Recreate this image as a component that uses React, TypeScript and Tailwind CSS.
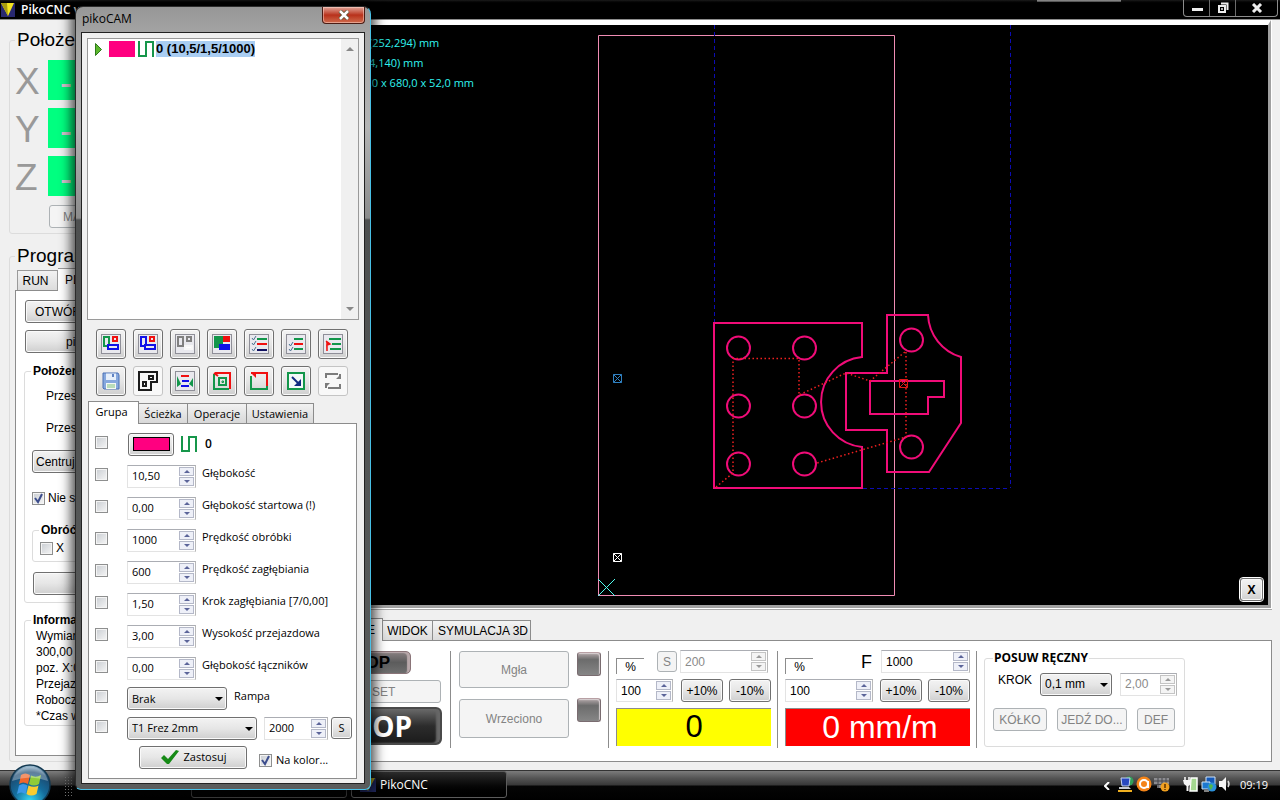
import React, { useState } from "react";

const segoe = "font-['Open_Sans','Noto_Sans',sans-serif]";
const arial = "font-['Liberation_Sans',Arial,sans-serif]";

const btnOn =
    "rounded-[3px] border border-[#707070] bg-linear-to-b from-[#f3f3f3] via-[#e6e6e6] to-[#cfcfcf] text-black shadow-[inset_0_0_0_1px_#fafafa]";
const btnOff = "rounded-[3px] border border-[#adb2b5] bg-[#f4f4f4] text-[#838383]";

interface SpinProps {
    id?: string;
    label: string;
    value: string;
    className: string;
    disabled?: boolean;
}

function Spin({ id, label, value, className, disabled }: SpinProps) {
    const [val, setVal] = useState(value);
    const step = "flex flex-1 w-full items-center justify-center border";
    const color = disabled ? "border-[#c4c4c4] bg-[#f4f4f4] text-[#9a9a9a]" : "border-[#b4b8c8] bg-[#eef0f8] text-[#5b6499]";

    return (
        <div className={`flex h-[23px] shrink-0 border border-[#e3e3e3] border-t-[#abadb3] border-r-[#b8b8b8] bg-white ${className}`}>
            <input
                id={id}
                aria-label={label}
                value={val}
                onChange={(e) => setVal(e.target.value)}
                disabled={disabled}
                className={`w-0 min-w-0 flex-1 bg-transparent pl-1 outline-none ${disabled ? "text-[#8a8a8a]" : "text-black"}`}
            />
            <div className="flex w-4 flex-col gap-px p-px pl-0">
                <button type="button" aria-label={`${label} +`} className={`${step} ${color}`}>
                    <svg viewBox="0 0 6 3" className="h-[3px] w-[6px]" fill="currentColor"><path d="M3 0L6 3H0z" /></svg>
                </button>
                <button type="button" aria-label={`${label} -`} className={`${step} ${color}`}>
                    <svg viewBox="0 0 6 3" className="h-[3px] w-[6px]" fill="currentColor"><path d="M0 0H6L3 3z" /></svg>
                </button>
            </div>
        </div>
    );
}

function Drop({ label, value, className }: { label: string; value: string; className: string }) {
    return (
        <div className={`relative shrink-0 ${className}`}>
            <select aria-label={label} className={`h-[23px] w-full appearance-none pl-1 ${btnOn}`}>
                <option>{value}</option>
            </select>
            <svg viewBox="0 0 8 4" className="pointer-events-none absolute top-[10px] right-1 h-1 w-2"><path d="M0 0H8L4 4z" /></svg>
        </div>
    );
}

function Check({ id, checked, label, className = "" }: { id: string; checked?: boolean; label?: string; className?: string }) {
    const [on, setOn] = useState(!!checked);

    return (
        <span className={`relative block size-[13px] shrink-0 ${className}`}>
            <input
                id={id}
                type="checkbox"
                aria-label={label}
                checked={on}
                onChange={() => setOn(!on)}
                className="block size-[13px] appearance-none border border-[#8e8f8f] bg-linear-to-br from-[#c9cdd2] to-[#f6f6f6] shadow-[inset_0_0_0_1px_#f4f4f4]"
            />
            {on && (
                <svg viewBox="0 0 13 13" className="pointer-events-none absolute inset-0" fill="none" stroke="#3b4c8c" strokeWidth="2">
                    <path d="M3 6l3 4 4-8" />
                </svg>
            )}
        </span>
    );
}

function ZigZag({ className }: { className: string }) {
    return (
        <svg viewBox="0 0 16 16" className={className} fill="none" stroke="#16964a" strokeWidth="2">
            <path d="M1 0V15H8V1H15V16" />
        </svg>
    );
}

const plate = <rect x="0.5" y="0.5" width="19" height="19" fill="#e9e9ee" stroke="#8f8f98" strokeWidth="1" />;

const tools = [
    {
        name: "Grupy kolorów",
        icon: <g fill="none" strokeWidth="2">{plate}<path d="M3 3H8V12H3z" stroke="#12964a" /><path d="M12 3H16V7H12z" stroke="#f01010" /><path d="M7 11H17V15H7z" fill="#e9e9ee" stroke="#1010e8" /></g>,
    },
    {
        name: "Jeden kolor",
        icon: <g fill="none" strokeWidth="2">{plate}<path d="M3 3H8V12H3z" stroke="#1010e8" /><path d="M12 3H16V7H12z" stroke="#f01010" /><path d="M7 11H17V15H7z" fill="#e9e9ee" stroke="#1010e8" /></g>,
    },
    {
        name: "Ukryj grupy",
        icon: <g fill="none" strokeWidth="2">{plate}<path d="M3 3H8V12H3z" stroke="#808080" /><path d="M12 3H16V7H12z" stroke="#808080" /><path d="M10 12H17V15H10z" fill="#fff" stroke="#f8f8f8" /></g>,
    },
    {
        name: "Wypełnienie",
        icon: <g>{plate}<path d="M2 2H11V14H2z" fill="#12964a" /><path d="M11 2H18V8H11z" fill="#f01010" /><path d="M7 10H18V16H7z" fill="#1010e8" /></g>,
    },
    {
        name: "Lista operacji",
        icon: <g fill="none">{plate}<path d="M3 4l1.500 2 2.500-4M3 9l1.500 2 2.500-4M3 15l1.500 2 2.500-4" stroke="#4a7090" /><path d="M8 5H18" stroke="#12964a" strokeWidth="2" /><path d="M8 10H18" stroke="#f01010" strokeWidth="2" /><path d="M8 16H18" stroke="#101060" strokeWidth="2" /></g>,
    },
    {
        name: "Lista ścieżek",
        icon: <g fill="none">{plate}<path d="M3 10l1.500 2 2.500-4M3 15l1.500 2 2.500-4" stroke="#4a7090" /><path d="M8 5H17M8 15H17" stroke="#12964a" strokeWidth="2" /><path d="M8 10H17" stroke="#f01010" strokeWidth="2" /></g>,
    },
    {
        name: "Kolejność",
        icon: <g fill="none">{plate}<path d="M6 5H18M9 10H18M7 15H18" stroke="#12964a" strokeWidth="2" /><path d="M3 7L7 10 4 11V17" fill="#f01010" stroke="#f01010" strokeWidth="1.500" /></g>,
    },
    {
        name: "Zapisz",
        icon: <g><path d="M2 2H17L18 4V18H3L2 17z" fill="#86a8de" stroke="#4b70b4" /><path d="M5 2.500H15V9H5z" fill="#e6effa" /><path d="M11 3H13V6H11z" fill="#5e82c2" /><path d="M5 12H15V18H5z" fill="#f4f8f4" /><path d="M6 14H14M6 16H14" stroke="#7fc07f" /></g>,
    },
    {
        name: "Obrys",
        off: true,
        icon: <g fill="none" stroke="#1c1c1c" strokeWidth="2"><path d="M1 1H19V11H13V19H1z" /><path d="M11 5H15V8H11z" /><path d="M5 11H8V15H5z" /></g>,
    },
    {
        name: "Odstęp",
        icon: <g fill="none">{plate}<path d="M6 5H14" stroke="#f01010" strokeWidth="2" /><path d="M7 10H14M6 15H14" stroke="#1010e8" strokeWidth="2" /><path d="M2 5V16L6 13zM18 7V16L14 13z" fill="#12964a" /></g>,
    },
    {
        name: "Kieszeń",
        icon: <g fill="none" strokeWidth="2"><path d="M18 18V2H3" stroke="#f01010" /><path d="M2 3V18H17" stroke="#12964a" /><path d="M7 7H14V14H7z" stroke="#12964a" /><path d="M10 10H11.500V11.500H10z" stroke="#12964a" strokeWidth="1" /><path d="M2 2L6 5" stroke="#f01010" /></g>,
    },
    {
        name: "Kontur",
        icon: <g fill="none" strokeWidth="2"><path d="M2 2H18V15" stroke="#f01010" /><path d="M2 5V18H18V15" stroke="#12964a" /><path d="M2 2H7V7z" fill="#f01010" /></g>,
    },
    {
        name: "Przesuń",
        icon: <g fill="none" strokeWidth="2"><path d="M2 2H18V18H2z" stroke="#12964a" fill="#f4f8f8" /><path d="M6 6L12 12" stroke="#102a80" /><path d="M15 8V15H8z" fill="#102a80" /></g>,
    },
    {
        name: "Odśwież",
        off: true,
        icon: <g fill="none" stroke="#7c7c7c" strokeWidth="2"><path d="M3 7V3H15M17 3V7M17 13V17H5M3 17V13" /><path d="M13 8H18V3zM7 12H2V17z" fill="#7c7c7c" stroke="none" /></g>,
    },
];

const params = [
    ["Głębokość", "10,50"],
    ["Głębokość startowa (!)", "0,00"],
    ["Prędkość obróbki", "1000"],
    ["Prędkość zagłębiania", "600"],
    ["Krok zagłębiania [7/0,00]", "1,50"],
    ["Wysokość przejazdowa", "3,00"],
    ["Głębokość łączników", "0,00"],
];

function CamDialog() {
    return (
        <div
            role="dialog"
            aria-label="pikoCAM"
            className={`absolute top-[6px] left-[75px] z-10 w-[296px] rounded-t-lg rounded-b-md border border-[#2b2b2b] border-r-[#49c0e6] border-b-[#49c0e6] bg-[linear-gradient(to_bottom,#979797_0,#a6a6a6_30px,#b4b4b4_120px,#8c8c8c_211px,#4e5050_213px,#5a5c5c_100%)] px-[5px] pb-[5px] text-[12px] leading-4 shadow-[0_0_12px_4px_rgba(0,0,0,0.7)] ${segoe}`}
        >
            <div className="flex h-[25px] items-start justify-between">
                <span className="pt-1 pl-px">pikoCAM</span>
                <button
                    type="button"
                    aria-label="Zamknij"
                    className="flex h-[17px] w-[43px] items-center justify-center rounded-b-[4px] border border-t-0 border-[#4a1c14] bg-linear-to-b from-[#e0a398] via-[#b8301a] to-[#cf6a4c] shadow-[inset_0_0_0_1px_rgba(255,220,210,0.5)]"
                >
                    <svg viewBox="0 0 12 10" className="h-[10px] w-3" fill="none"><path d="M2 1L10 9M10 1L2 9" stroke="#553" strokeWidth="4" /><path d="M2 1L10 9M10 1L2 9" stroke="#fff" strokeWidth="2.500" /></svg>
                </button>
            </div>
            <div className="border border-[#222] bg-[#f0f0f0] p-[5px] pb-1">
                <div className="flex h-[282px] justify-between border border-[#9a9a9a] bg-white">
                    <div className="flex h-5 items-center pl-[7px]">
                        <svg viewBox="0 0 7 13" className="mr-[7px] h-[13px] w-[7px]"><path d="M0.500 0.500L6.500 6.500L0.500 12.500z" fill="#5cb82c" stroke="#2f7a1c" /></svg>
                        <span className="mr-[3px] h-4 w-[26px] bg-[#ff0080]" />
                        <ZigZag className="mr-[2px] size-4" />
                        <b className={`bg-[#a9cdf2] text-[13px] ${arial}`}>0 (10,5/1,5/1000)</b>
                    </div>
                    <div className="flex w-[17px] flex-col items-center justify-between bg-[#f0f0f0] py-2">
                        <svg viewBox="0 0 8 4" className="h-1 w-2" fill="#888"><path d="M4 0L8 4H0z" /></svg>
                        <svg viewBox="0 0 8 4" className="h-1 w-2" fill="#888"><path d="M0 0H8L4 4z" /></svg>
                    </div>
                </div>

                <div className="flex flex-wrap gap-[7px] py-[9px] pl-[9px] pb-0">
                    {tools.map((t) => (
                        <button
                            key={t.name}
                            type="button"
                            aria-label={t.name}
                            className={`flex size-[30px] items-center justify-center ${t.off ? "rounded-[3px] border border-[#c4c4c4] bg-[#f8f8f8]" : btnOn}`}
                        >
                            <svg viewBox="0 0 20 20" className="size-5">{t.icon}</svg>
                        </button>
                    ))}
                </div>

                <div className="mt-[5px] flex items-end pl-px">
                    <button type="button" className="z-[1] -mb-px h-[23px] w-[51px] border border-b-0 border-[#8c8c8c] bg-white pr-1 pb-[2px] text-[11px]">Grupa</button>
                    {[["Ścieżka", "w-[49px]"], ["Operacje", "w-[59px]"], ["Ustawienia", "w-[67px]"]].map(([t, w]) => (
                        <button key={t} type="button" className={`h-5 border border-b-0 border-l-0 border-[#8c8c8c] bg-linear-to-b from-[#f2f2f2] to-[#d8d8d8] text-[11px] ${w}`}>{t}</button>
                    ))}
                </div>
                <div className="mr-[2px] ml-px border border-[#8c8c8c] bg-white px-[6px] pt-1 pb-[7px] text-[11px]">
                    <div className="flex h-8 items-center">
                        <Check id="c-color" label="Kolor" className="mb-[3px]" />
                        <button type="button" aria-label="Kolor grupy" className={`mr-[7px] ml-[20px] flex h-[23px] w-[46px] items-center justify-center ${btnOn}`}>
                            <span className="h-[14px] w-[37px] border border-black bg-[#ff0080]" />
                        </button>
                        <ZigZag className="mr-2 size-4" />
                        <span className="text-[12px] font-semibold">0</span>
                    </div>
                    {params.map(([label, value], i) => (
                        <div key={label} className="flex h-8 items-center last:h-[31px]">
                            <Check id={`c-${i}`} className="mb-1" />
                            <Spin label={label} value={value} className="mr-[6px] ml-[19px] w-[69px]" />
                            <label htmlFor={`c-${i}`} className="pb-[6px]">{label}</label>
                        </div>
                    ))}
                    <div className="flex h-[29px] items-center">
                        <Check id="c-ramp" className="mb-1" />
                        <Drop label="Rampa" value="Brak" className="mr-[7px] ml-[19px] w-[100px]" />
                        <label htmlFor="c-ramp" className="pb-[6px]">Rampa</label>
                    </div>
                    <div className="flex h-[30px] items-center">
                        <Check id="c-tool" label="Narzędzie" className="mb-1" />
                        <Drop label="Narzędzie" value="T1 Frez 2mm" className="mr-[7px] ml-[19px] w-[130px]" />
                        <Spin label="Obroty" value="2000" className="mr-[3px] w-[64px]" />
                        <button type="button" className={`h-[22px] w-[21px] shrink-0 ${btnOn}`}>S</button>
                    </div>
                    <div className="flex h-7 items-center pl-[44px]">
                        <button type="button" className={`mr-3 flex h-[23px] w-[108px] items-center justify-center gap-1 text-[11px] ${btnOn}`}>
                            <svg viewBox="0 0 20 16" className="h-4 w-5"><path d="M1 9L4 6L8 10L16 1L19 2L9 15H7z" fill="#168a16" /></svg>
                            Zastosuj
                        </button>
                        <Check id="c-all" checked className="mt-[6px]" />
                        <label htmlFor="c-all" className="pt-[5px] pl-1">Na kolor...</label>
                    </div>
                </div>
            </div>
        </div>
    );
}

const group = "rounded-[3px] border border-[#dcdcdc]";

function Sidebar() {
    return (
        <aside className="flex w-[360px] shrink-0 flex-col pt-2 pl-[9px] text-[12px] leading-4">
            <fieldset className={`h-[206px] ${group}`}>
                <legend className="ml-[5px] px-[2px] text-[19px] leading-6">Położenie</legend>
                <div className="mt-2 flex flex-col gap-2 pl-[5px]">
                    {["X", "Y", "Z"].map((axis) => (
                        <div key={axis} className="flex h-10 items-center">
                            <span className="w-[33px] pt-1 text-[37px] text-[#999]">{axis}</span>
                            <span className="h-10 flex-1 bg-[#00ff80] pl-3 text-[36px] leading-[46px] text-[#d4c4cc]">-</span>
                        </div>
                    ))}
                </div>
                <button type="button" disabled className={`mt-[9px] ml-[39px] h-[23px] w-[90px] pl-[13px] text-left ${btnOff}`}>MASZYNA</button>
            </fieldset>

            <fieldset className={`mt-[10px] h-[518px] ${group}`}>
                <legend className="ml-[5px] px-[2px] text-[19px] leading-6">Program</legend>
                <div className="flex items-end pl-[7px]">
                    <button type="button" className="h-5 w-[41px] border border-b-0 border-[#9a9a9a] bg-linear-to-b from-[#f2f2f2] to-[#dcdcdc] pr-1">RUN</button>
                    <button type="button" className="z-[1] -mb-px h-[23px] w-[70px] border border-b-0 border-l-0 border-[#9a9a9a] bg-white pl-[7px] text-left">PLIK</button>
                </div>
                <div className="ml-[5px] h-[466px] border border-[#8c8c8c] bg-white pt-[9px] pl-2">
                    <button type="button" className={`ml-px block h-[23px] w-[120px] pl-[9px] text-left ${btnOn}`}>OTWÓRZ</button>
                    <button type="button" className={`mt-[7px] ml-px block h-[23px] w-[140px] pl-[40px] text-left ${btnOn}`}>pikoCAM</button>
                    <fieldset className={`mt-[10px] h-[240px] ${group}`}>
                        <legend className="ml-[6px] px-[2px] font-bold">Położenie</legend>
                        <div className="pl-[7px]">
                            <p className="mt-[9px] pl-[14px]">Przesuń X</p>
                            <p className="mt-4 pl-[14px]">Przesuń Y</p>
                            <button type="button" className={`mt-[14px] block h-[23px] w-[90px] pl-[3px] text-left ${btnOn}`}>Centruj</button>
                            <div className="mt-[17px] flex items-center gap-[3px]">
                                <Check id="s-skip" checked />
                                <label htmlFor="s-skip">Nie skaluj</label>
                            </div>
                            <fieldset className={`mt-[16px] h-[40px] ${group}`}>
                                <legend className="ml-[6px] px-[2px] font-bold">Obróć</legend>
                                <div className="flex items-center gap-[3px] pt-[2px] pl-[7px]">
                                    <Check id="s-x" />
                                    <label htmlFor="s-x">X</label>
                                </div>
                            </fieldset>
                            <button type="button" aria-label="Wykonaj" className={`mt-[10px] ml-px block h-[23px] w-[140px] ${btnOn}`} />
                        </div>
                    </fieldset>
                    <fieldset className={`mt-[9px] h-[114px] ${group}`}>
                        <legend className="ml-[6px] px-[2px] font-bold">Informacje</legend>
                        <div className="pl-[11px]">
                            <p>Wymiary</p>
                            <p>300,00</p>
                            <p>poz. X:0</p>
                            <p>Przejazd</p>
                            <p>Roboczy</p>
                            <p>*Czas w</p>
                        </div>
                    </fieldset>
                </div>
            </fieldset>
        </aside>
    );
}

const holes = [[738, 348], [804, 348], [738, 406], [804, 406], [738, 464], [804, 464], [911, 340], [911, 447]];
const marks = [[617, 378, "#2f80c0"], [617, 557, "#ffffff"], [903, 383, "#e01818"]] as const;

function Canvas() {
    return (
        <div className="min-h-0 flex-1 border-b border-[#a8a8a8] bg-white pr-px pb-px">
            <div className="relative h-full border-t-[5px] border-r-[3px] border-b-[3px] border-t-white border-r-[#a0a0a0] border-b-[#a0a0a0] bg-black">
                <svg viewBox="360 25 908 580" className="absolute inset-0 h-full w-full" fill="none">
                    <path d="M598.500 35.500H894.500V595.500H598.500z" stroke="#f08cb4" />
                    <path d="M714.500 25V323M1010.500 25V488M863 488.500H1010" stroke="#0c0cb4" strokeDasharray="4 3" />
                    <g stroke="#f00c78" strokeWidth="2">
                        <path d="M714 323H862V357A45.200 45.200 0 0 0 862 447V488H714z" />
                        <path d="M887 315H928A46 46 0 0 0 961 357V423L929 472H887V430H846V373H887z" />
                        <path d="M870 381H944V397H928V414H870z" />
                        {holes.map(([x, y]) => (
                            <circle key={`${x}-${y}`} cx={x + 0.5} cy={y} r="11.500" />
                        ))}
                    </g>
                    <path d="M716 487L733 473V358.500H799V395L846 373L870 381L906 351V437L817 463" stroke="#f02020" strokeWidth="1.500" strokeDasharray="1.500 2.500" />
                    {marks.map(([x, y, c]) => (
                        <path key={`${x}-${y}`} d={`M${x - 3.5} ${y - 3.5}h8v8h-8zl8 8m0-8l-8 8`} stroke={c} />
                    ))}
                    <path d="M598 579L615 596M615 579L598 596" stroke="#50fff0" />
                </svg>
                <div className={`relative pt-2 pl-[9px] text-[11px] leading-5 text-[#30f4f0] ${segoe}`}>
                    <p>(252,294) mm</p>
                    <p>4,140) mm</p>
                    <p>,0 x 680,0 x 52,0 mm</p>
                </div>
                <button type="button" className={`absolute right-[5px] bottom-[4px] size-[23px] text-[12px] font-bold outline outline-white ${btnOn} ${segoe}`}>X</button>
            </div>
        </div>
    );
}

function Led() {
    return <span className="size-6 rounded-[3px] border border-[#7a6c70] border-t-[#b8a0a4] bg-linear-to-b from-[#b4a8aa] via-[#6c6c6c] via-30% to-[#868686] shadow-[inset_-1px_1px_1px_#d8d0d2]" />;
}

interface RateProps {
    name: string;
    head: React.ReactNode;
    spin: string;
    display: React.ReactNode;
    width: string;
}

function Rate({ name, head, spin, display, width }: RateProps) {
    return (
        <div className={`-mt-px mr-[6px] ml-[7px] shrink-0 ${width}`}>
            <div className="flex h-[23px] items-center">
                <span className="mt-2 h-4 w-[28px] border-t border-l border-[#8c8c8c] text-center leading-4">%</span>
                {head}
            </div>
            <div className="mt-[6px] flex items-center">
                <Spin label={name} value="100" className={spin} />
                <button type="button" className={`mr-[6px] ml-auto h-[23px] w-[42px] ${btnOn}`}>+10%</button>
                <button type="button" className={`h-[23px] w-[42px] ${btnOn}`}>-10%</button>
            </div>
            {display}
        </div>
    );
}

function ControlPanel() {
    const tab = "h-5 border border-b-0 border-[#8c8c8c] bg-linear-to-b from-[#f4f4f4] to-[#dcdcdc]";
    const rule = <span className="h-[97px] w-px shrink-0 bg-[#8c8c8c]" />;

    return (
        <section className="mt-2 mb-2 shrink-0 text-[12px] leading-4">
            <div className="flex items-end">
                <button type="button" className="-mb-px h-[23px] w-[23px] border border-b-0 border-[#8c8c8c] bg-white pr-[7px] text-right">E</button>
                <button type="button" className={`w-[50px] border-l-0 ${tab}`}>WIDOK</button>
                <button type="button" className={`w-[98px] border-l-0 pl-[3px] ${tab}`}>SYMULACJA 3D</button>
            </div>
            <div className="flex h-[122px] items-start border border-[#8c8c8c] bg-white pt-[10px]">
                <div className="mr-2 flex w-[81px] shrink-0 flex-col items-start">
                    <button type="button" className="h-[23px] w-[50px] rounded-[5px] border border-[#8a7478] bg-linear-to-b from-[#8a8082] via-[#5c5c5c] to-[#6e6e6e] pr-[20px] text-right text-[17px] leading-5 font-bold text-black shadow-[inset_-3px_1px_1px_#b8a8aa]">OP</button>
                    <button type="button" disabled className={`mt-[6px] h-[23px] w-[80px] pl-[10px] text-left ${btnOff}`}>SET</button>
                    <button type="button" className="mt-[4px] h-[38px] w-[81px] rounded-[6px] border-2 border-[#4a4a4a] bg-linear-to-b from-[#6a6a6a] via-[#2c2c2c] to-[#1c1c1c] pr-[28px] text-right font-['Open_Sans',sans-serif] text-[28px] leading-8 font-bold text-white shadow-[inset_-4px_0_2px_#666]">OP</button>
                </div>
                {rule}
                <div className="mx-2 flex shrink-0 flex-col gap-[11px]">
                    <button type="button" disabled className={`h-[37px] w-[110px] ${btnOff}`}>Mgła</button>
                    <button type="button" disabled className={`h-[39px] w-[110px] ${btnOff}`}>Wrzeciono</button>
                </div>
                <div className="mt-px mr-[7px] flex shrink-0 flex-col gap-[22px]">
                    <Led />
                    <Led />
                </div>
                {rule}
                <Rate
                    name="Obroty %"
                    width="w-[155px]"
                    spin="w-[57px]"
                    head={
                        <>
                            <button type="button" disabled className={`mr-[3px] ml-auto h-[21px] w-[20px] ${btnOff}`}>S</button>
                            <Spin label="Obroty wrzeciona" value="200" disabled className="mr-[3px] w-[88px]" />
                        </>
                    }
                    display={<output className="mt-[6px] block h-[38px] border-t border-l border-[#8c8c8c] bg-[#ffff00] text-center text-[31px] leading-[36px]">0</output>}
                />
                {rule}
                <Rate
                    name="Posuw %"
                    width="w-[185px]"
                    spin="w-[88px]"
                    head={
                        <>
                            <label htmlFor="feed" className="mr-[9px] ml-auto text-[18px]">F</label>
                            <Spin id="feed" label="Posuw F" value="1000" className="w-[89px]" />
                        </>
                    }
                    display={<output className="mt-[6px] block h-[38px] border-t border-l border-[#8c8c8c] bg-[#ff0000] pl-1 text-center text-[32px] leading-[36px] text-white">0 mm/m</output>}
                />
                {rule}
                <fieldset className="-mt-px ml-[7px] h-[97px] w-[201px] shrink-0 rounded-[3px] border border-[#dcdcdc] pl-2">
                    <legend className={`px-px text-[12px] font-bold ${segoe}`}>POSUW RĘCZNY</legend>
                    <div className="mt-[6px] flex items-center">
                        <span className="w-[47px] pb-2 pl-[5px]">KROK</span>
                        <Drop label="Krok" value="0,1 mm" className="mr-2 w-[72px]" />
                        <Spin label="Krok własny" value="2,00" disabled className="w-[57px]" />
                    </div>
                    <div className="mt-3 flex">
                        <button type="button" disabled className={`mr-[10px] h-[23px] w-[54px] ${btnOff}`}>KÓŁKO</button>
                        <button type="button" disabled className={`mr-[10px] h-[23px] w-[70px] ${btnOff}`}>JEDŹ DO...</button>
                        <button type="button" disabled className={`h-[23px] w-[38px] ${btnOff}`}>DEF</button>
                    </div>
                </fieldset>
            </div>
        </section>
    );
}

function TitleBar() {
    return (
        <header className={`flex h-5 shrink-0 items-start bg-linear-to-b from-[#1c1c1c] to-black to-20% text-[12px] text-white shadow-[inset_0_-2px_0_-1px_#8c8c8c] ${segoe}`}>
            <svg viewBox="0 0 14 14" className="mt-[3px] ml-px size-[14px]"><path d="M0 0H14V14H0z" fill="#282870" /><path d="M0 0H13L7 13z" fill="#f4e420" /><path d="M0 0H6L7 13z" fill="#a89c10" /></svg>
            <h1 className="pl-[6px] leading-5 font-semibold">PikoCNC v</h1>
            <span className="mr-[62px] ml-auto h-[2px] w-[84px] bg-linear-to-b from-[#9a9a9a] to-[#444]" />
            <div className="mr-[2px] flex h-[17px] rounded-b-[4px] border border-t-0 border-[#8c8c8c]">
                <button type="button" aria-label="Minimalizuj" className="flex w-[26px] items-center justify-center border-r border-[#6c6c6c]">
                    <svg viewBox="0 0 12 10" className="h-[10px] w-3"><path d="M1 5H12V8H1z" fill="#eee" /></svg>
                </button>
                <button type="button" aria-label="Przywróć" className="flex w-[26px] items-center justify-center border-r border-[#6c6c6c]">
                    <svg viewBox="0 0 12 12" className="size-3" fill="none" stroke="#eee"><path d="M4 1.500H10.500V8" strokeWidth="2" /><path d="M2 4H8V10H2z" strokeWidth="2" /><path d="M4.500 6.500H5.500V7.500H4.500z" strokeWidth="1" /></svg>
                </button>
                <button type="button" aria-label="Zamknij program" className="flex w-[41px] items-center justify-center">
                    <svg viewBox="0 0 12 10" className="h-[10px] w-3" fill="none" stroke="#eee" strokeWidth="3"><path d="M2 1L10 9M10 1L2 9" /></svg>
                </button>
            </div>
        </header>
    );
}

function StartOrb() {
    return (
        <button type="button" aria-label="Start" className="relative z-[1] -mt-[7px] ml-[9px] size-[42px] shrink-0">
            <svg viewBox="0 0 42 42" className="size-[42px]">
                <defs>
                    <radialGradient id="orb" cx="0.5" cy="0.9" r="0.9">
                        <stop offset="0" stopColor="#38d8f4" />
                        <stop offset="0.45" stopColor="#146c9c" />
                        <stop offset="0.8" stopColor="#1c4a70" />
                        <stop offset="1" stopColor="#a8c8dc" />
                    </radialGradient>
                </defs>
                <circle cx="21" cy="21" r="20" fill="url(#orb)" stroke="#123850" strokeWidth="1.500" />
                <path d="M12 11Q16 8 21 11L19 20Q14 17 10 20z" fill="#f0662c" />
                <path d="M22 11.500Q27 14 32 11L30 20Q25 23 20 20z" fill="#90cc38" />
                <path d="M10 21.500Q14 18.500 18.500 21.500L16.500 30Q12 27 8 30z" fill="#3c98e8" />
                <path d="M19.500 21.500Q25 24 29.500 21.500L27.500 30Q22 33 17.500 30z" fill="#fccc30" />
                <path d="M3 17A18.500 18.500 0 0 1 39 17Q21 10 3 17z" fill="#fff" opacity="0.3" />
            </svg>
        </button>
    );
}

function Taskbar() {
    return (
        <footer className={`flex h-[30px] shrink-0 border-t border-[#333] bg-[linear-gradient(to_bottom,#7c7c7c_0,#555_7px,#383838_14px,#050505_15px,#000_100%)] text-[12px] text-white ${segoe}`}>
            <StartOrb />
            <span className="mt-[5px] ml-[13px] h-5 w-2 bg-[radial-gradient(#777_1px,transparent_1px)] bg-[size:3px_3px]" />
            <span className="ml-[119px] h-[27px] w-[156px] rounded-[3px] border border-[#444]" />
            <button type="button" className="ml-[4px] flex h-[27px] w-[156px] items-center rounded-[3px] border border-[#5c5c5c] bg-linear-to-b from-[#2c2c2c] to-black pl-2">
                <svg viewBox="0 0 16 16" className="mr-[4px] size-4"><path d="M0 1H16V15H0z" fill="#202860" /><path d="M1 1H15L8 14z" fill="#b8ac20" /></svg>
                PikoCNC
            </button>
            <div className="ml-auto flex items-center pr-3">
                <svg viewBox="0 0 6 8" className="mt-px mr-2 h-2 w-[6px]" fill="none" stroke="#fff" strokeWidth="2"><path d="M5 0L1 4L5 8" /></svg>
                <svg viewBox="0 0 16 16" className="mr-[2px] mb-1 size-4"><circle cx="11" cy="5" r="4.500" fill="#30a058" /><path d="M3 2H12L11 10H4z" fill="#2848c0" stroke="#c8d4f0" /><path d="M1 11H11L13 13H1z" fill="#c8ccd4" /><path d="M0 15H14" stroke="#f0b020" strokeWidth="2" /></svg>
                <svg viewBox="0 0 16 16" className="mr-[2px] mb-1 size-4"><circle cx="8" cy="8" r="7.500" fill="#f48418" /><circle cx="8" cy="8" r="4" fill="none" stroke="#fff" strokeWidth="2" /><path d="M12 5V12" stroke="#fff" strokeWidth="2" /></svg>
                <svg viewBox="0 0 16 16" className="mr-[13px] mb-1 size-4"><path d="M0 2H15V12H3V9H0z" fill="#8c8c90" /><path d="M0 5H15M0 8.500H15M4 2V12M8 2V12M12 2V12" stroke="#44464c" /><circle cx="11" cy="11" r="4.500" fill="#f0a020" /><path d="M11 8V12M11 13V14" stroke="#5c3000" strokeWidth="1.500" /></svg>
                <svg viewBox="0 0 16 16" className="mr-[2px] mb-1 size-4"><path d="M8 2H14V15H7z" fill="#a4d890" stroke="#fff" strokeWidth="1.500" /><path d="M0 4H8V8L5.500 10V15H3.500V10L1 8z" fill="#f4f4f4" /><path d="M2 1V4M6 1V4" stroke="#fff" strokeWidth="1.500" /></svg>
                <svg viewBox="0 0 16 16" className="mr-[2px] mb-1 size-4"><path d="M5 1H14V8H5z" fill="#1458b8" stroke="#d0e4f8" /><path d="M1 6H9V13H1z" fill="#1c78d0" stroke="#d0e4f8" /><path d="M3 15H8" stroke="#fff" /><circle cx="11" cy="11" r="4.500" fill="#2c90d8" /><path d="M8 9Q11 7 12 10L10 14Q8 12 8 9z" fill="#50b848" /></svg>
                <svg viewBox="0 0 12 16" className="mr-[9px] mb-1 h-4 w-3"><path d="M0 5H3L7 1V15L3 11H0z" fill="#f4f4f4" /><path d="M9 5Q11 8 9 11" stroke="#ddd" fill="none" strokeWidth="1.500" /></svg>
                <time className="text-[11px]">09:19</time>
            </div>
        </footer>
    );
}

export default function App() {
    return (
        <div className={`relative flex h-screen w-full flex-col overflow-hidden bg-[#f0f0f0] text-black ${arial}`}>
            <TitleBar />
            <main className="flex min-h-0 flex-1">
                <Sidebar />
                <div className="flex min-w-0 flex-1 flex-col pr-2">
                    <Canvas />
                    <ControlPanel />
                </div>
            </main>
            <Taskbar />
            <CamDialog />
        </div>
    );
}
